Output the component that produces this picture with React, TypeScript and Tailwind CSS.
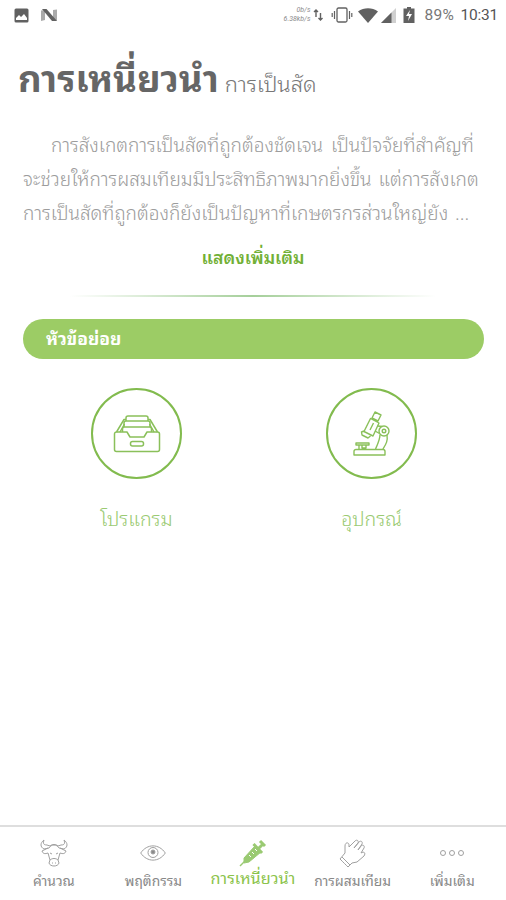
import type { ReactNode } from "react";

const thaiFont = "font-['Noto_Sans_Thai_Looped','Noto_Sans_Thai','Noto_Sans',sans-serif]";

const intro = [
  { text: "การสังเกตการเป็นสัดที่ถูกต้องชัดเจน เป็นปัจจัยที่สำคัญที่", className: "pl-[28px] [word-spacing:3px]" },
  { text: "จะช่วยให้การผสมเทียมมีประสิทธิภาพมากยิ่งขึ้น แต่การสังเกต", className: "[word-spacing:2px]" },
  { text: "การเป็นสัดที่ถูกต้องก็ยังเป็นปัญหาที่เกษตรกรส่วนใหญ่ยัง ...", className: "[word-spacing:2px]" },
];

function StatusBar() {
  return (
    <header className="flex h-[30px] items-center justify-between pl-[14px] pr-[8px] text-[#616161]">
      <div className="flex items-center gap-[12px]">
        <svg width="15" height="15" viewBox="0 0 15 15" aria-hidden="true">
          <rect x="0.5" y="0.5" width="14" height="14" rx="1.5" fill="currentColor" />
          <path d="M2 12v-2l3-3 2 2 3-3 3 4v2z" fill="#fff" />
        </svg>
        <svg width="17" height="14" viewBox="0 0 17 14" aria-hidden="true">
          <path d="M0 2.500 4 2v10l-4 1zM12 2l4-.5v11L12 13z" fill="#aaa" />
          <path d="M1 1h4.500l10.500 12h-5z" fill="currentColor" />
        </svg>
      </div>
      <div className="flex items-center">
        <div className="mr-[3px] flex flex-col items-end font-['Roboto',sans-serif] text-[7px] italic leading-[9px] text-[#8a8a8a]">
          <span>0b/s</span>
          <span>6.38kb/s</span>
        </div>
        <svg width="10" height="12" viewBox="0 0 10 12" aria-hidden="true">
          <path d="M3 8V1.500M1 3l2-2 2 2M7.500 4v6.500M5.500 9l2 2 2-2" fill="none" stroke="currentColor" strokeWidth="1.4" />
        </svg>
        <svg className="ml-[8px]" width="22" height="16" viewBox="0 0 22 16" fill="none" stroke="currentColor" aria-hidden="true">
          <rect x="6" y="1" width="10" height="14" rx="1.5" strokeWidth="1.3" />
          <path d="M3.500 4v8M1.200 6v4M18.500 4v8M20.800 6v4" strokeWidth="1.2" />
        </svg>
        <svg className="ml-[5px]" width="20" height="15" viewBox="0 0 20 15" aria-hidden="true">
          <path d="M0 3.500C6-.7 14-.7 20 3.500L10 15z" fill="currentColor" />
        </svg>
        <svg className="ml-[3px]" width="15" height="15" viewBox="0 0 15 15" aria-hidden="true">
          <path d="M15 0v15H0z" fill="#d0d0d0" />
          <path d="M10.500 4.500V15H0z" fill="currentColor" />
        </svg>
        <svg className="ml-[7px]" width="12" height="16" viewBox="0 0 12 16" aria-hidden="true">
          <path d="M4 0h4v1.500h3.500V16H.5V1.500H4z" fill="currentColor" />
          <path d="M7 3 3 9h3l-1 5 4-7H6z" fill="#fff" />
        </svg>
        <span className="ml-[9px] w-[32px] whitespace-nowrap font-['Roboto',sans-serif] text-[15.5px] leading-[20px] tracking-[0.4px] text-[#777]">89%</span>
        <span className="ml-[4px] whitespace-nowrap font-['Roboto',sans-serif] text-[15.5px] leading-[20px] tracking-[-0.2px] text-[#555]">10:31</span>
      </div>
    </header>
  );
}

function DrawerIcon() {
  return (
    <svg width="48" height="38" viewBox="0 0 48 38" fill="none" stroke="#8ac05a" strokeWidth="1.5" strokeLinejoin="round" aria-hidden="true">
      <path d="M3.500 17H14l3 5h14l3-5h10.500a2 2 0 0 1 2 2v15.500a2 2 0 0 1-2 2h-41a2 2 0 0 1-2-2V19a2 2 0 0 1 2-2z" />
      <path d="M3.500 17 11 4.500h2M44.500 17 37 4.500h-2M7 17l4.500-8M41 17l-4.500-8" />
      <path d="M13 6.500V3a2 2 0 0 1 2-2h18a2 2 0 0 1 2 2v3.500M11 11.500V8a2 2 0 0 1 2-2h22a2 2 0 0 1 2 2v3.500M9.500 17v-3a2 2 0 0 1 2-2h25a2 2 0 0 1 2 2v3" />
      <rect x="17.500" y="26.500" width="13" height="4.500" rx="2" />
    </svg>
  );
}

function MicroscopeIcon() {
  return (
    <svg width="38" height="46" viewBox="0 0 38 46" fill="none" stroke="#8ac05a" strokeWidth="1.4" strokeLinejoin="round" aria-hidden="true">
      <path d="m22 1 6 3-3 6-6-3zM17.500 7.500l8.500 4.500-6 13-9-4.500zM11 20l-2.500 1 .5 3 6 3 2.500-2M17 19l3.500-7" />
      <path d="m24.500 15 5 .5M22 20l4.500 2.500" />
      <circle cx="31" cy="20" r="5" />
      <circle cx="31" cy="20" r="1.800" />
      <path d="M34 24c1 6-1 9-4 14M27 23.500c0 5-2 9-4.500 14.500" />
      <path d="M3 38.500h27a2 2 0 0 1 2 2V44H1v-3.500a2 2 0 0 1 2-2zM3 32h13v2H3zM6 34v4M9 34v3h4v-3" />
    </svg>
  );
}

function Topic({ icon, label }: { icon: ReactNode; label: string }) {
  return (
    <button className="flex flex-col items-center">
      <span className="flex h-[91px] w-[91px] items-center justify-center rounded-full border-2 border-[#82bb4e]">{icon}</span>
      <span className="mt-[23px] whitespace-nowrap text-[19.5px] font-light leading-[32px] text-[#9aca72]">{label}</span>
    </button>
  );
}

function BullIcon() {
  return (
    <svg width="28" height="28" viewBox="0 0 28 28" fill="none" stroke="#a0a0a0" strokeWidth="1" strokeLinejoin="round" aria-hidden="true">
      <path d="M4 1C0 4 0 8 4 10l5-1c2-4 8-4 10 0l5 1c4-2 4-6 0-9 1 3 1 5-3 5l-3 1c-2-2-6-2-8 0L7 6C3 6 3 4 4 1z" />
      <path d="m8 9-6 3c1 3 3 3 6 2l2 7-1 3c1 4 9 4 10 0l-1-3 2-7c3 1 5 1 6-2l-6-3M10 21c2-2 6-2 8 0M10 14l2 1M18 14l-2 1M12 24h1M16 24h-1" />
    </svg>
  );
}

function EyeIcon() {
  return (
    <svg width="26" height="16" viewBox="0 0 26 16" fill="none" stroke="#a0a0a0" aria-hidden="true">
      <path d="M.7 8C7-1.500 19-1.500 25.300 8 19 17.500 7 17.500.7 8z" />
      <circle cx="13" cy="7.500" r="5" />
      <circle cx="13" cy="7" r="2" fill="#8a8a8a" />
    </svg>
  );
}

function SyringeIcon() {
  return (
    <svg width="28" height="28" viewBox="0 0 28 28" fill="none" stroke="#9aca72" aria-hidden="true">
      <path d="M1 27l6-6" strokeWidth="1.500" />
      <path d="M5 19 16 7l6 6-12 10-5 1z" fill="#9aca72" />
      <path d="m14.500 5 8.500 9M18 11l6-6M21 2l5 5" strokeWidth="3" />
      <path d="m10 16 2 2M13 13l2 2M16 10l2 2" stroke="#fff" />
    </svg>
  );
}

function GloveIcon() {
  return (
    <svg width="28" height="28" viewBox="0 0 28 28" fill="none" stroke="#a0a0a0" strokeLinejoin="round" aria-hidden="true">
      <path d="m1 20 5-6V7c0-4 4-4 4-1v2l6-6c2-2 4 0 3 2l-4 5 5-6c2-2 4 0 3 2l-4 6 3-4c2-2 4 0 3 2l-3 5c3-2 5 0 3 3l-7 6-5 1-4 4c-2-2-5-5-8-8zM3 18l8 8" />
    </svg>
  );
}

function MoreIcon() {
  return (
    <svg width="26" height="8" viewBox="0 0 26 8" fill="none" stroke="#a0a0a0" aria-hidden="true">
      <circle cx="4" cy="4" r="2.500" />
      <circle cx="13" cy="4" r="2.500" />
      <circle cx="22" cy="4" r="2.500" />
    </svg>
  );
}

const tabs = [
  { label: "คำนวณ", icon: <BullIcon /> },
  { label: "พฤติกรรม", icon: <EyeIcon /> },
  { label: "การเหนี่ยวนำ", icon: <SyringeIcon />, active: true },
  { label: "การผสมเทียม", icon: <GloveIcon /> },
  { label: "เพิ่มเติม", icon: <MoreIcon /> },
];

export default function App() {
  return (
    <div className={`flex h-[900px] w-[506px] flex-col overflow-hidden bg-white ${thaiFont}`}>
      <StatusBar />
      <main className="flex flex-1 flex-col">
        <div className="flex h-[92px] items-baseline gap-[6px] pl-[18px] pt-[20px]">
          <h1 className="whitespace-nowrap text-[36.5px] font-bold leading-[52px] text-[#666]">การเหนี่ยวนำ</h1>
          <span className="whitespace-nowrap text-[22px] font-light text-[#777]">การเป็นสัด</span>
        </div>
        <div className="pl-[23px] pt-[5px] text-[19px] font-light leading-[34px] text-[#9c9c9c]">
          {intro.map((line) => (
            <p key={line.text} className={`h-[34px] whitespace-nowrap ${line.className}`}>{line.text}</p>
          ))}
        </div>
        <button className="mt-[11px] h-[32px] self-center whitespace-nowrap text-[17.7px] font-semibold leading-[32px] text-[#72b035]">แสดงเพิ่มเติม</button>
        <div className="mx-[70px] mt-[23px] h-[2px] bg-linear-to-r from-transparent via-[#a5cf9a] to-transparent" />
        <h2 className="ml-[23px] mt-[22px] h-[40px] w-[461px] rounded-full bg-[#9ccc65] pl-[23px] text-[17.5px] font-bold leading-[37px] text-white">หัวข้อย่อย</h2>
        <div className="ml-[19px] mt-[29px] grid w-[470px] grid-cols-2 self-start">
          <Topic icon={<DrawerIcon />} label="โปรแกรม" />
          <Topic icon={<MicroscopeIcon />} label="อุปกรณ์" />
        </div>
      </main>
      <nav className="grid h-[75px] grid-cols-5 border-t-2 border-[#dedede] px-[4px]">
        {tabs.map((tab) => (
          <button key={tab.label} className="flex flex-col items-center pt-[11px]">
            <span className="flex h-[30px] items-center">{tab.icon}</span>
            <span className={tab.active ? "-mt-[3px] whitespace-nowrap text-[16.2px] leading-[24px] text-[#8bc34a]" : "whitespace-nowrap text-[13.8px] leading-[24px] text-[#888]"}>{tab.label}</span>
          </button>
        ))}
      </nav>
    </div>
  );
}
